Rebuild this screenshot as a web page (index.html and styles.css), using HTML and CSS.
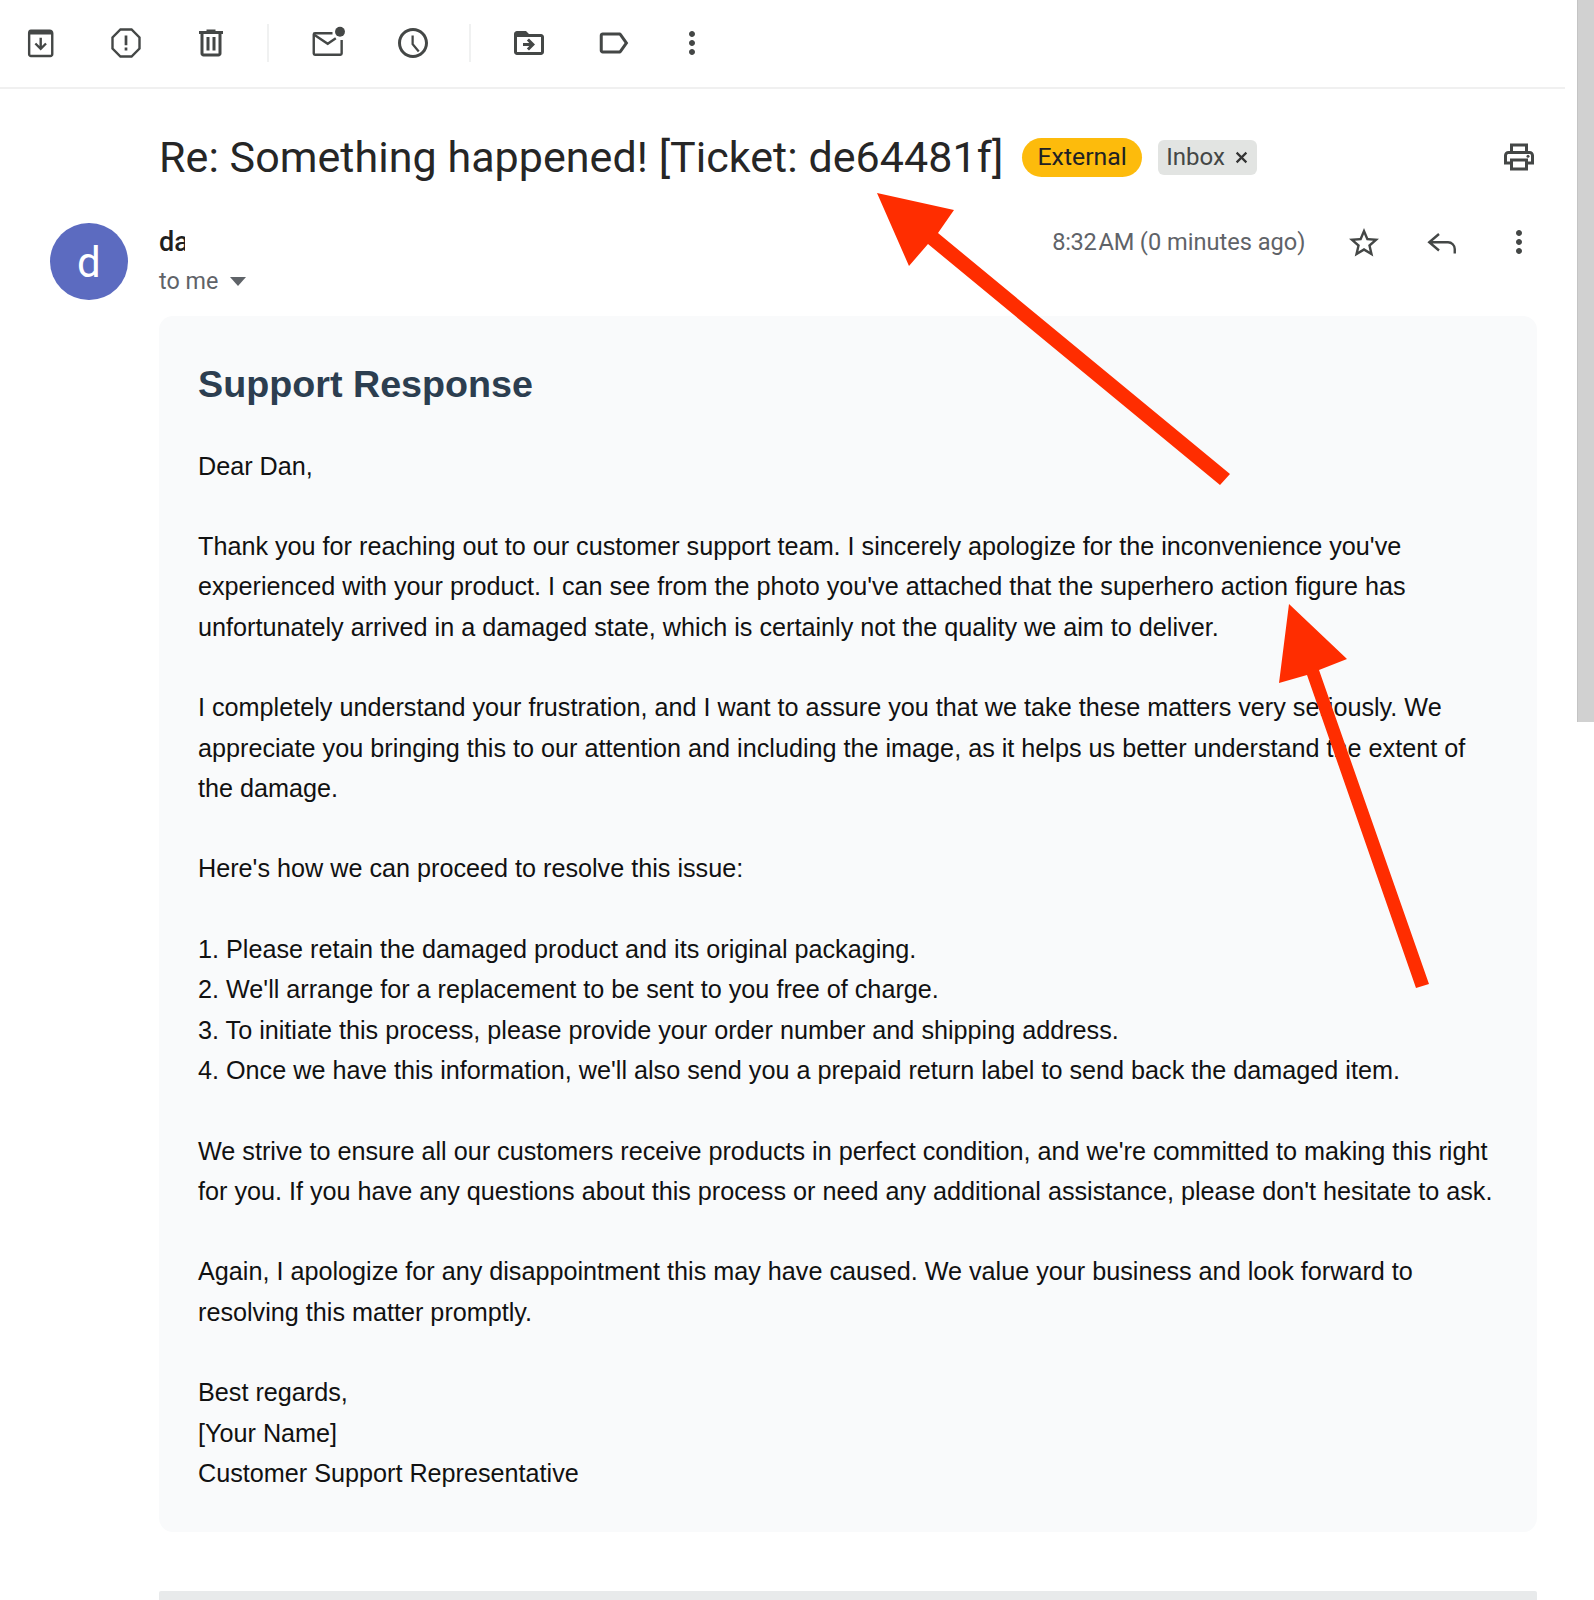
FILE: index.html
```html
<!DOCTYPE html>
<html lang="en">
<head>
<meta charset="utf-8">
<title>Re: Something happened!</title>
<link rel="stylesheet" href="styles.css">
</head>
<body>
<div class="app">
  <main class="mail">
    <nav class="toolbar">
      <div class="tool-group">
        <svg class="icon" viewBox="0.700 0 24 24"><path fill-rule="evenodd" d="M6 3h12.500c1.400 0 2.500 1.100 2.500 2.500v14c0 1.100-.9 2-2 2H6c-1.100 0-2-.9-2-2v-14C4 4.100 4.600 3 6 3zm-.4 3.300v13.200c0 .2.200.4.400.4h13c.2 0 .4-.2.400-.4V6.300H5.600z"/><path d="M11.700 8.500h1.600v5.500l2.200-2.200 1.100 1.100-4.100 4.100-4.100-4.100 1.100-1.100 2.200 2.200z"/></svg>
        <svg class="icon" viewBox="0 0 24 24"><path class="line" d="M8.300 3h7.400L21 8.300v7.400L15.700 21H8.300L3 15.700V8.300z"/><path d="M11.100 7h1.800v6.500h-1.800zM11.100 15h1.800v2h-1.800z"/></svg>
        <svg class="icon" viewBox="0 0 24 24"><path d="M15 4V3H9v1H4v2h1v13c0 1.100.9 2 2 2h10c1.100 0 2-.9 2-2V6h1V4h-5zm2 15H7V6h10v13zM9 8h2v9H9zm4 0h2v9h-2z"/></svg>
      </div>
      <span class="sep"></span>
      <div class="tool-group">
        <svg class="icon" viewBox="0 0 24 24"><path class="line" d="M15 5.500H3.300c-.5 0-.8.3-.8.8v12.700c0 .5.300.8.800.8h17c.5 0 .8-.3.800-.8V10"/><path class="line" d="M2.800 6.500l9 6 5.400-3.600"/><circle cx="20" cy="4.500" r="3.300"/></svg>
        <svg class="icon" viewBox="0 0 24 24"><path d="M11.990 2C6.470 2 2 6.480 2 12s4.470 10 9.990 10C17.520 22 22 17.520 22 12S17.520 2 11.990 2zM12 20c-4.420 0-8-3.580-8-8s3.580-8 8-8 8 3.580 8 8-3.580 8-8 8zm.5-13H11v6l4.250 5.150 1.150-1L12.500 12.500z"/></svg>
      </div>
      <span class="sep"></span>
      <div class="tool-group">
        <svg class="icon" viewBox="0 0 24 24"><path fill-rule="evenodd" d="M20 6h-8l-2-2H4c-1.100 0-2 .9-2 2v12c0 1.100.9 2 2 2h16c1.100 0 2-.9 2-2V8c0-1.100-.9-2-2-2zm0 12H4V8h16v10z"/><path d="M11.990 9l-1.410 1.410L12.160 12H8v2h4.160l-1.590 1.590L11.990 17 16 13.010z"/></svg>
        <svg class="icon" viewBox="0.500 0 24 24"><path d="M17.630 5.840C17.270 5.330 16.670 5 16 5L5 5.010C3.900 5.010 3 5.900 3 7v10c0 1.100.9 1.990 2 1.990L16 19c.67 0 1.270-.33 1.630-.84L22 12l-4.370-6.160zM16 17H5V7h11l3.550 5L16 17z"/></svg>
        <svg class="icon icon-more" viewBox="0 0 24 24"><path d="M12 8c1.100 0 2-.9 2-2s-.9-2-2-2-2 .9-2 2 .9 2 2 2zm0 2c-1.100 0-2 .9-2 2s.9 2 2 2 2-.9 2-2-.9-2-2-2zm0 6c-1.100 0-2 .9-2 2s.9 2 2 2 2-.9 2-2-.9-2-2-2z"/></svg>
      </div>
    </nav>

    <header class="subject">
      <h1 class="title">Re: Something happened! [Ticket: de64481f]</h1>
      <span class="chip chip-external">External</span>
      <span class="chip chip-inbox">Inbox
        <svg class="chip-x" viewBox="0 0 12 12"><path d="M1.500 1.500l9 9M10.500 1.500l-9 9"/></svg>
      </span>
      <svg class="icon print" viewBox="0 0 24 24"><path d="M19 8h-1V3H6v5H5c-1.660 0-3 1.340-3 3v6h4v4h12v-4h4v-6c0-1.660-1.340-3-3-3zM8 5h8v3H8V5zm8 12v2H8v-4h8v2zm2-2v-2H6v2H4v-4c0-.55.45-1 1-1h14c.55 0 1 .45 1 1v4h-2z"/><circle cx="18" cy="11.500" r="1"/></svg>
    </header>

    <section class="message">
      <div class="avatar">d</div>
      <div class="content">
        <div class="meta">
          <div class="sender">
            <div class="name">da</div>
            <div class="to">to me <span class="caret"></span></div>
          </div>
          <div class="actions">
            <span class="time"><span class="clock">8:32&#8202;AM</span> (0 minutes ago)</span>
            <svg class="icon icon-low" viewBox="0 0 24 24"><path d="M22 9.240l-7.190-.62L12 2 9.190 8.630 2 9.240l5.460 4.730L5.820 21 12 17.270 18.180 21l-1.630-7.030L22 9.240zM12 15.400l-3.760 2.270 1-4.280-3.320-2.880 4.380-.38L12 6.100l1.710 4.040 4.380.38-3.320 2.880 1 4.280L12 15.400z"/></svg>
            <svg class="icon icon-low" viewBox="0 0 24 24"><path class="line" d="M10 6l-6.500 5.500 6.500 5.500M3.500 11.500H16a4.500 4.500 0 0 1 4.500 4.500v3"/></svg>
            <svg class="icon" viewBox="0 0 24 24"><path d="M12 8c1.100 0 2-.9 2-2s-.9-2-2-2-2 .9-2 2 .9 2 2 2zm0 2c-1.100 0-2 .9-2 2s.9 2 2 2 2-.9 2-2-.9-2-2-2zm0 6c-1.100 0-2 .9-2 2s.9 2 2 2 2-.9 2-2-.9-2-2-2z"/></svg>
          </div>
        </div>
        <article class="card">
          <h2 class="card-title">Support Response</h2>
          <p>Dear Dan,</p>
          <p>Thank you for reaching out to our customer support team. I sincerely apologize for the inconvenience you've<br>experienced with your product. I can see from the photo you've attached that the superhero action figure has<br>unfortunately arrived in a damaged state, which is certainly not the quality we aim to deliver.</p>
          <p>I completely understand your frustration, and I want to assure you that we take these matters very seriously. We<br>appreciate you bringing this to our attention and including the image, as it helps us better understand the extent of<br>the damage.</p>
          <p>Here's how we can proceed to resolve this issue:</p>
          <p>1. Please retain the damaged product and its original packaging.<br>2. We'll arrange for a replacement to be sent to you free of charge.<br>3. To initiate this process, please provide your order number and shipping address.<br>4. Once we have this information, we'll also send you a prepaid return label to send back the damaged item.</p>
          <p>We strive to ensure all our customers receive products in perfect condition, and we're committed to making this right<br>for you. If you have any questions about this process or need any additional assistance, please don't hesitate to ask.</p>
          <p>Again, I apologize for any disappointment this may have caused. We value your business and look forward to<br>resolving this matter promptly.</p>
          <p>Best regards,<br>[Your Name]<br>Customer Support Representative</p>
        </article>
        <div class="next-bar"></div>
      </div>
    </section>
  </main>
  <div class="scrollbar"></div>
  <svg class="arrows" viewBox="0 0 1594 1600">
    <polygon points="877,193 954,210 938,233 1230,474 1220,485 928,244 909,266"/>
    <polygon points="1289,604 1347,659 1319,670 1429,984 1416,988 1307,675 1279,683"/>
  </svg>
</div>
</body>
</html>
```
FILE: styles.css
```css
* { box-sizing: border-box; }
html, body { margin: 0; padding: 0; background: #fff; }
.app {
  position: relative;
  display: flex;
  width: 1594px;
  height: 1600px;
  overflow: hidden;
  font-family: Roboto, "Liberation Sans", sans-serif;
  color: #1f1f1f;
}
.mail { flex: 0 0 1565px; width: 1565px; }
.scrollbar {
  flex: 0 0 17px;
  height: 722px;
  margin-left: 12px;
  background: #d1d1d1;
  border-left: 1px solid #c4c4c4;
}
.icon { display: block; flex: none; width: 36px; height: 36px; fill: #444746; }
.icon .line { fill: none; stroke: #444746; stroke-width: 1.600; }
.icon-low { margin-top: 2px; }

.toolbar {
  display: flex;
  align-items: center;
  height: 89px;
  padding: 0 0 2px 23px;
  border-bottom: 2px solid #f0f0f0;
}
.tool-group { display: flex; align-items: center; gap: 49px; }
.sep { width: 2px; height: 38px; margin: 0 40.500px 0 38px; background: #f0f1f1; }
.icon-more { margin-left: -7px; }

.subject {
  display: flex;
  align-items: center;
  height: 40px;
  margin-top: 48px;
  padding: 0 28px 0 159px;
}
.title {
  margin: 0;
  font-size: 43px;
  font-weight: 400;
  letter-spacing: 0.050px;
  line-height: 48px;
  white-space: nowrap;
  color: #262626;
}
.chip {
  display: flex;
  align-items: center;
  font-size: 24px;
  white-space: nowrap;
}
.chip-external {
  height: 39px;
  margin-left: 18.500px;
  padding: 0 15.500px 1px;
  border-radius: 20px;
  background: #fdbb0c;
  color: #202124;
  font-size: 24.800px;
}
.chip-inbox {
  height: 35px;
  margin-left: 16px;
  padding: 0 9px 0 8px;
  border-radius: 6px;
  background: #e2e4e2;
  color: #444746;
  gap: 10px;
}
.chip-x { width: 13px; height: 13px; fill: none; stroke: #333; stroke-width: 2; }
.print { margin-left: auto; }

.message { display: flex; margin-top: 46px; padding: 0 28px 0 50px; gap: 31.500px; }
.avatar {
  flex: none;
  width: 77.500px;
  height: 77px;
  padding-top: 2px;
  border-radius: 50%;
  background: #5c6bc0;
  color: #fff;
  font-size: 42px;
  line-height: 75px;
  text-align: center;
}
.content { flex: 1; min-width: 0; }
.meta { display: flex; justify-content: space-between; height: 93px; }
.name {
  width: 26px;
  overflow: hidden;
  font-size: 27px;
  font-weight: 500;
  line-height: 38px;
  color: #1f1f1f;
}
.to {
  display: flex;
  align-items: center;
  gap: 12px;
  margin-top: 1px;
  font-size: 23.300px;
  line-height: 38px;
  color: #5f6368;
}
.caret {
  width: 0;
  height: 0;
  border-left: 8px solid transparent;
  border-right: 8px solid transparent;
  border-top: 9px solid #5f6368;
}
.actions { display: flex; align-items: center; gap: 41.500px; height: 38px; }
.time { margin-right: -1px; font-size: 23.600px; line-height: 38px; color: #5f6368; white-space: nowrap; }
.clock { letter-spacing: -0.300px; }

.card {
  height: 1216px;
  padding: 39px;
  border-radius: 14px;
  background: #f9fafb;
  font-family: "Liberation Sans", Arial, sans-serif;
  font-size: 25.200px;
  line-height: 40.300px;
  color: #111;
}
.card-title {
  margin: 0 0 32.500px;
  font-size: 37.700px;
  font-weight: 700;
  line-height: 58px;
  color: #2c3e50;
}
.card p { margin: 0 0 40.300px; white-space: nowrap; }
.next-bar { height: 20px; margin-top: 59px; border-radius: 2px; background: #e8eaeb; }

.arrows {
  position: absolute;
  left: 0;
  top: 0;
  width: 1594px;
  height: 1600px;
  fill: #ff2d00;
  pointer-events: none;
}
```
